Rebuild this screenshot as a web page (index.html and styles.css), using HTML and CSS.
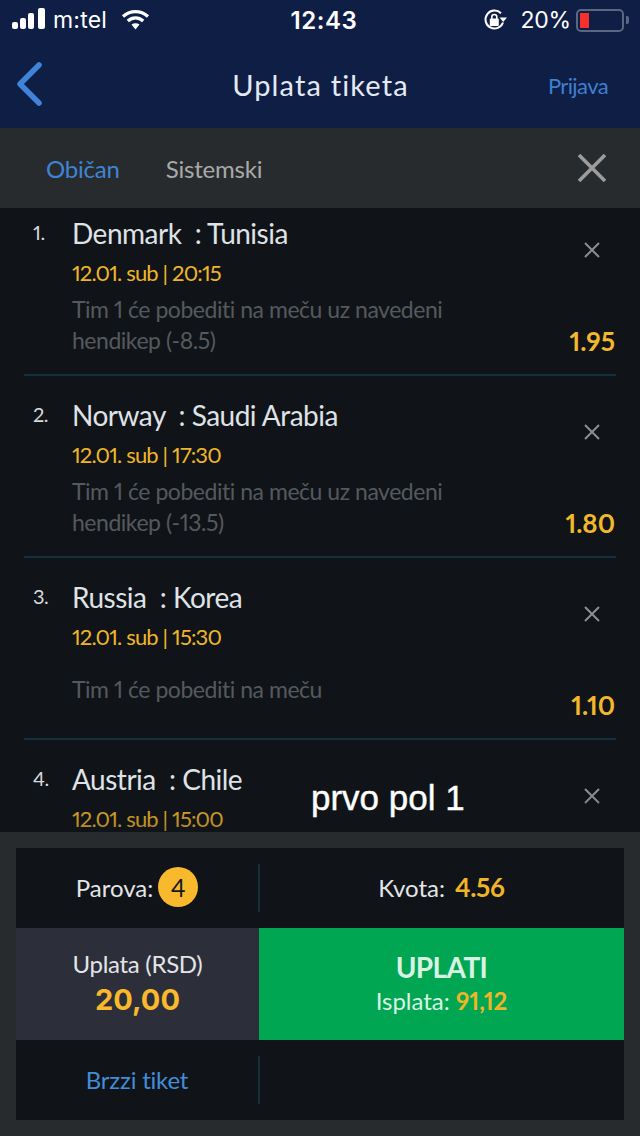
FILE: index.html
```html
<!DOCTYPE html>
<html lang="sr">
<head>
<meta charset="utf-8">
<title>Uplata tiketa</title>
<link rel="stylesheet" href="styles.css">
</head>
<body>
<div class="phone">
  <header class="top">
    <div class="status">
      <div class="status-left">
        <svg class="signal" width="34" height="22" viewBox="0 0 34 22"><rect x="0" y="14" width="6" height="7" rx="2"/><rect x="8" y="10" width="6" height="11" rx="2"/><rect x="16" y="5" width="6" height="16" rx="2"/><rect x="26" y="0" width="7" height="21" rx="2"/></svg>
        <span class="carrier">m:tel</span>
        <svg class="wifi" width="29" height="21" viewBox="0 0 29 21"><g fill="none" stroke="#fff" stroke-width="3.4"><path d="M2 7.5C9.500 1 19.500 1 27 7.500"/><path d="M6.800 12C11.500 8 17.500 8 22.200 12"/></g><path d="M10.500 15.500C13 13.700 16 13.700 18.500 15.500L14.500 20.500Z" fill="#fff"/></svg>
      </div>
      <span class="time">12:43</span>
      <div class="status-right">
        <svg class="rotlock" width="24" height="24" viewBox="0 0 24 24"><path d="M20 14.500A9 9 0 1 1 18 5.300" fill="none" stroke="#fff" stroke-width="2"/><path d="M16.500 9.500L24 9.500L20.200 14Z" fill="#fff"/><rect x="6.800" y="10.500" width="9" height="7.500" rx="1" fill="#fff"/><path d="M8.800 11V9a2.500 2.500 0 0 1 5 0v2" fill="none" stroke="#fff" stroke-width="1.600"/></svg>
        <span class="percent">20%</span>
        <div class="battery"><span class="battery-fill"></span></div>
        <span class="battery-nub"></span>
      </div>
    </div>
    <nav class="nav">
      <svg class="back" width="30" height="46" viewBox="0 0 30 46"><path d="M24 4L5 23L24 42" fill="none" stroke="#3f84d8" stroke-width="5.500" stroke-linecap="round" stroke-linejoin="round"/></svg>
      <h1 class="title">Uplata tiketa</h1>
      <a class="login">Prijava</a>
    </nav>
  </header>

  <div class="tabs">
    <span class="tab tab-active">Običan</span>
    <span class="tab">Sistemski</span>
    <svg class="tabs-close" width="30" height="30" viewBox="0 0 30 30"><path d="M2 2L28 28M28 2L2 28" stroke="#9c9c9c" stroke-width="3.600" fill="none"/></svg>
  </div>

  <main class="list">
    <div class="list-inner">
      <article class="item">
        <span class="num">1.</span>
        <div class="info">
          <div class="match">Denmark&nbsp; : Tunisia</div>
          <div class="date">12.01. sub | 20:15</div>
          <div class="desc"><p>Tim 1 će pobediti na meču uz navedeni hendikep (-8.5)</p></div>
        </div>
        <div class="side">
          <svg class="remove" width="18" height="18" viewBox="0 0 18 18"><path d="M2 2L16 16M16 2L2 16" stroke="#8c8f92" stroke-width="2" fill="none"/></svg>
          <span class="odd">1.95</span>
        </div>
      </article>
      <article class="item">
        <span class="num">2.</span>
        <div class="info">
          <div class="match">Norway&nbsp; : Saudi Arabia</div>
          <div class="date">12.01. sub | 17:30</div>
          <div class="desc"><p>Tim 1 će pobediti na meču uz navedeni hendikep (-13.5)</p></div>
        </div>
        <div class="side">
          <svg class="remove" width="18" height="18" viewBox="0 0 18 18"><path d="M2 2L16 16M16 2L2 16" stroke="#8c8f92" stroke-width="2" fill="none"/></svg>
          <span class="odd">1.80</span>
        </div>
      </article>
      <article class="item">
        <span class="num">3.</span>
        <div class="info">
          <div class="match">Russia&nbsp; : Korea</div>
          <div class="date">12.01. sub | 15:30</div>
          <div class="desc"><p>Tim 1 će pobediti na meču</p></div>
        </div>
        <div class="side">
          <svg class="remove" width="18" height="18" viewBox="0 0 18 18"><path d="M2 2L16 16M16 2L2 16" stroke="#8c8f92" stroke-width="2" fill="none"/></svg>
          <span class="odd">1.10</span>
        </div>
      </article>
      <article class="item">
        <span class="num">4.</span>
        <div class="info">
          <div class="match">Austria&nbsp; : Chile</div>
          <div class="date">12.01. sub | 15:00</div>
        </div>
        <div class="side">
          <svg class="remove" width="18" height="18" viewBox="0 0 18 18"><path d="M2 2L16 16M16 2L2 16" stroke="#8c8f92" stroke-width="2" fill="none"/></svg>
        </div>
      </article>
    </div>
    <div class="fade"></div>
    <div class="caption">prvo pol 1</div>
  </main>

  <footer class="footer">
    <div class="panel">
      <div class="cell cell-pairs">Parova: <span class="badge">4</span></div>
      <div class="cell cell-odds">Kvota: <b class="gold">4.56</b></div>
      <div class="stake">
        <span class="stake-label">Uplata (RSD)</span>
        <span class="stake-value">20,00</span>
      </div>
      <div class="pay">
        <span class="pay-label">UPLATI</span>
        <span class="pay-sub">Isplata: <b class="gold">91,12</b></span>
      </div>
      <div class="cell cell-quick">Brzzi tiket</div>
      <div class="cell-empty"></div>
    </div>
  </footer>
</div>
</body>
</html>
```
FILE: styles.css
```css
* { box-sizing: border-box; }
html, body { margin: 0; padding: 0; }
body { background: #101418; font-family: "Lato", "Liberation Sans", sans-serif; font-variant-numeric: proportional-nums; }
.phone { width: 640px; height: 1136px; display: flex; flex-direction: column; overflow: hidden; position: relative; }

.top { height: 128px; background: #0f1e45; color: #fff; flex: none; }
.status { height: 40px; display: grid; grid-template-columns: 1fr auto 1fr; align-items: center; padding: 0 12px; }
.status-left { display: flex; align-items: center; }
.signal { fill: #fff; margin-top: -2px; }
.carrier { font-family: "Inter", sans-serif; font-size: 23px; margin-left: 7px; letter-spacing: 0.2px; }
.wifi { margin-left: 14px; margin-top: -2px; }
.time { font-family: "Inter", sans-serif; font-size: 24px; font-weight: 600; letter-spacing: 0.6px; position: relative; left: 4px; }
.status-right { display: flex; align-items: center; justify-content: flex-end; position: relative; right: -1px; }
.rotlock { margin-right: 13px; }
.percent { font-family: "Inter", sans-serif; font-size: 23px; margin-right: 5px; letter-spacing: -0.2px; }
.battery { width: 48px; height: 23px; border: 2px solid #5b6782; border-radius: 5px; padding: 2px; }
.battery-fill { display: block; width: 9px; height: 100%; background: #f6302c; }
.battery-nub { width: 3px; height: 8px; margin-left: 2px; background: #5b6782; border-radius: 0 2px 2px 0; }

.nav { height: 88px; display: grid; grid-template-columns: 1fr auto 1fr; align-items: center; padding: 0 32px 0 15px; }
.back { display: block; }
.title { margin: 0; font-size: 29px; font-weight: 400; color: #e4e9f2; letter-spacing: 1.15px; position: relative; left: 9px; }
.login { justify-self: end; font-size: 22px; color: #3f7fd0; margin-top: 2px; letter-spacing: -0.6px; }

.tabs { height: 80px; flex: none; background: #282b2d; display: flex; align-items: center; padding: 0 33px 0 46px; font-size: 24px; letter-spacing: -0.2px; }
.tab { color: #a8a9aa; margin-right: 46px; }
.tab-active { color: #3f84d4; }
.tabs-close { margin-left: auto; }

.list { flex: 1; min-height: 0; background: #101418; overflow: hidden; position: relative; }
.list-inner { margin-top: -14px; }
.item { height: 182px; margin: 0 24px; border-bottom: 2px solid #14303f; display: flex; }
.num { width: 48px; padding: 26px 0 0 9px; font-size: 20px; line-height: 24px; color: #d8dadd; letter-spacing: -0.5px; }
.info { flex: 1; padding-top: 21px; }
.match { font-size: 28px; line-height: 36px; color: #dfe2e6; letter-spacing: -0.5px; }
.date { margin-top: 7px; font-size: 22px; line-height: 30px; color: #efb528; letter-spacing: -0.85px; }
.desc { height: 62px; margin-top: 6px; display: flex; align-items: center; width: 400px; }
.desc p { margin: 0; font-size: 23px; line-height: 31px; color: #55595d; letter-spacing: -0.47px; }
.side { width: 56px; display: flex; flex-direction: column; align-items: flex-end; padding-top: 47px; }
.remove { margin-right: 15px; display: block; }
.odd { margin: 68px 1px 0 0; font-size: 26px; line-height: 28px; font-weight: 700; color: #f2b82c; }

.fade { position: absolute; left: 0; right: 0; bottom: 0; height: 40px; background: linear-gradient(rgba(16,20,24,0), rgba(16,20,24,0.3)); }
.caption { position: absolute; left: 311px; top: 570px; font-family: "Liberation Sans", sans-serif; font-size: 35px; line-height: 40px; color: #fff; white-space: nowrap; -webkit-text-stroke: 0.4px #fff; }

.footer { height: 304px; flex: none; background: #282b2d; padding: 16px; }
.panel { height: 272px; background: #101418; display: grid; grid-template-columns: 243px 365px; grid-template-rows: 80px 112px 80px; }
.cell { display: flex; align-items: center; justify-content: center; font-size: 24px; color: #e3e5e8; padding-bottom: 2px; }
.cell-pairs { margin: 16px -1px 16px 0; border-right: 2px solid #14303f; gap: 5px; }
.cell-odds { gap: 10px; }
.gold { color: #efb528; font-weight: 700; }
.cell-odds .gold { font-size: 26px; letter-spacing: -0.3px; }
.badge { width: 40px; height: 40px; border-radius: 50%; background: #f9b92c; color: #14181c; display: flex; align-items: center; justify-content: center; font-size: 25px; }
.stake { background: #2c2f39; display: flex; flex-direction: column; align-items: center; justify-content: center; }
.stake-label { font-size: 24px; line-height: 32px; color: #e3e5e8; letter-spacing: -0.3px; margin-top: -3px; }
.stake-value { font-family: "Inter", sans-serif; font-size: 29px; line-height: 36px; font-weight: 700; color: #f9b92c; margin-top: 2px; }
.pay { background: #00a651; display: flex; flex-direction: column; align-items: center; justify-content: center; }
.pay-label { font-size: 28px; line-height: 36px; font-weight: 700; color: #d8f3e4; letter-spacing: -0.6px; margin-top: -2px; }
.pay-sub { font-size: 24px; line-height: 32px; color: #d8f3e4; }
.cell-quick { margin: 16px -1px 16px 0; border-right: 2px solid #14303f; color: #438cd8; letter-spacing: -0.2px; }
```
